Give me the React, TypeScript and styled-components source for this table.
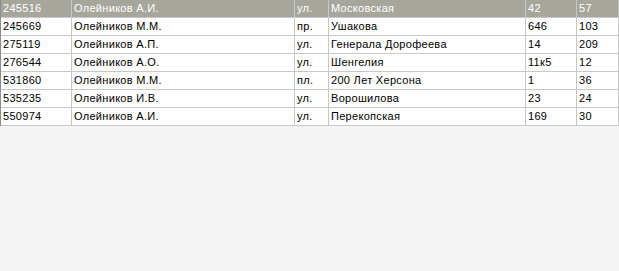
import React from 'react';
import styled, { createGlobalStyle } from 'styled-components';

const GlobalStyle = createGlobalStyle`
  html, body {
    margin: 0;
    padding: 0;
    background: #f4f4f4;
  }
`;

const COLS = [71, 223, 34, 197, 51];

const rows = [
  ['245516', 'Олейников А.И.', 'ул.', 'Московская', '42', '57'],
  ['245669', 'Олейников М.М.', 'пр.', 'Ушакова', '646', '103'],
  ['275119', 'Олейников А.П.', 'ул.', 'Генерала Дорофеева', '14', '209'],
  ['276544', 'Олейников А.О.', 'ул.', 'Шенгелия', '11к5', '12'],
  ['531860', 'Олейников М.М.', 'пл.', '200 Лет Херсона', '1', '36'],
  ['535235', 'Олейников И.В.', 'ул.', 'Ворошилова', '23', '24'],
  ['550974', 'Олейников А.И.', 'ул.', 'Перекопская', '169', '30'],
];

const App = () => {
  return (
    <>
      <GlobalStyle />
      <Grid>
        {rows.map((r, i) => (
          <Row key={r[0]} selected={i === 0}>
            {r.map((c, j) => (
              <Cell key={j} w={COLS[j]}>{c}</Cell>
            ))}
          </Row>
        ))}
      </Grid>
    </>
  );
};

export default App;

const Grid = styled.div`
  display: flex;
  flex-direction: column;
  width: 619px;
  border-left: 1px solid #8c8c8c;
  box-sizing: border-box;
  font-family: 'Liberation Sans', Arial, sans-serif;
  font-size: 11px;
  letter-spacing: 0.3px;
`;

const Row = styled.div<{ selected?: boolean }>`
  display: flex;
  height: 18px;
  background: ${(p) => (p.selected ? '#a6a69c' : '#ffffff')};
  color: ${(p) => (p.selected ? '#ffffff' : '#000000')};
`;

const Cell = styled.div<{ w?: number }>`
  box-sizing: border-box;
  ${(p) => (p.w ? `width: ${p.w}px;` : 'flex: 1;')}
  height: 18px;
  line-height: 17px;
  padding-left: 2px;
  border-right: 1px solid #c8c8c8;
  border-bottom: 1px solid #c8c8c8;
  white-space: nowrap;
  overflow: hidden;
`;
